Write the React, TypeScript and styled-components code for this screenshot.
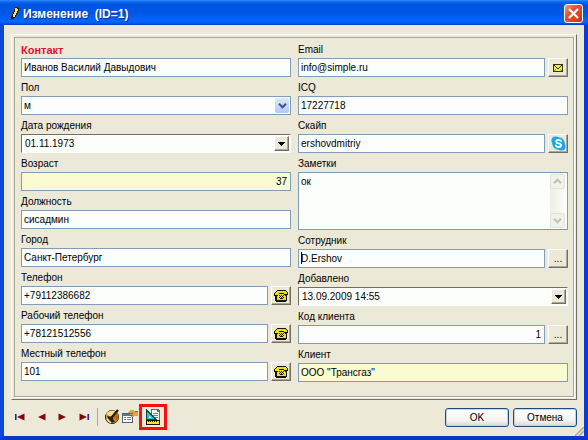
import React, { useId } from 'react';
import styled, { createGlobalStyle, css } from 'styled-components';

const GlobalStyle = createGlobalStyle`
  * { box-sizing: border-box; }
  body { margin: 0; background: #ece9d8; }
  body, input, textarea, select, button {
    font-family: "Liberation Sans", Arial, sans-serif;
    font-size: 10px;
    color: #000;
  }
`;

const Window = styled.main`
  display: flex;
  flex-direction: column;
  min-height: 100vh;
  background: #ece9d8;
  border: 4px solid #0848dc;
  border-width: 0 4px 4px;
  border-bottom-color: #0838c8;
  border-right-color: #0a3cd0;
`;

const TitleBar = styled.header`
  display: flex;
  align-items: center;
  gap: 3px;
  height: 25px;
  margin: 0 -4px;
  padding: 2px 5px 0 7px;
  background: linear-gradient(#2f8cf8 0, #0a66ea 2px, #0054e0 5px, #0056e6 14px, #0064fc 19px, #0066ff 22px, #003fd0 25px);
`;

const Title = styled.h1`
  flex: 1;
  margin: 0;
  font-size: 12px;
  line-height: 16px;
  font-weight: bold;
  color: #fff;
  text-shadow: 1px 1px 0 #0a2a90;
  white-space: pre;
`;

const CloseButton = styled.button`
  display: flex;
  align-items: center;
  justify-content: center;
  width: 19px;
  height: 19px;
  padding: 0;
  border: 1px solid #fff;
  border-radius: 3px;
  background: linear-gradient(135deg, #f0a088, #e0573a 35%, #d84020 75%, #b83010);
`;

const GroupFrame = styled.section`
  flex: 1;
  display: flex;
  margin: 9px 7px 0;
  padding: 2px;
  border: 1px solid;
  border-color: #fff #716f64 #716f64 #fff;
`;

const GroupInner = styled.div`
  flex: 1;
  display: grid;
  grid-template-columns: 1fr 1fr;
  gap: 7px;
  padding: 5px 5px 14px 6px;
  border: 1px solid #aca899;
  box-shadow: 1px 1px 0 #fff;
`;

const Column = styled.div`
  display: flex;
  flex-direction: column;
  gap: 4px;
  min-width: 0;
`;

const Field = styled.div`
  display: flex;
  flex-direction: column;
  gap: 1px;
`;

const Label = styled.label<{ $required?: boolean }>`
  height: 14px;
  line-height: 14px;
  white-space: nowrap;
  ${p => p.$required && css`
    color: #dc1435;
    font-size: 11px;
    font-weight: bold;
  `}
`;

const ControlRow = styled.div`
  display: flex;
  gap: 3px;
`;

const flatBorder = css`border: 1px solid #7f9db9;`;
const sunkenBorder = css`
  border: 1px solid;
  border-color: #716f64 #fff #fff #716f64;
`;

const TextBox = styled.input<{ $tone?: 'plain' | 'computed'; $right?: boolean; $caret?: boolean }>`
  flex: 1;
  min-width: 0;
  height: 19px;
  padding: 0 3px 1px 2px;
  border-radius: 0;
  outline: none;
  ${flatBorder}
  background: ${p => (p.$tone === 'computed' ? '#fbfbd2' : '#fcfefc')};
  text-align: ${p => (p.$right ? 'right' : 'left')};
  ${p => p.$caret && css`background: linear-gradient(#000, #000) 2px 2px / 1px 12px no-repeat #fcfefc;`}
`;

const ComboFrame = styled.div<{ $sunken?: boolean }>`
  display: grid;
  grid-template-columns: 1fr auto;
  grid-template-rows: 15px;
  height: 19px;
  background: #fcfefc;
  padding: 1px;
  ${p => (p.$sunken ? sunkenBorder : flatBorder)}
`;

const Select = styled.select`
  grid-area: 1 / 1 / 2 / 3;
  appearance: none;
  border: 0;
  outline: none;
  padding: 0 18px 0 1px;
  background: transparent;
`;

const SelectArrow = styled.span`
  grid-area: 1 / 2 / 2 / 3;
  display: flex;
  align-items: center;
  justify-content: center;
  width: 14px;
  border-radius: 2px;
  background: linear-gradient(#dce6fe, #b4c8f6);
  pointer-events: none;
`;

const DateInput = styled.input`
  min-width: 0;
  border: 0;
  outline: none;
  padding: 0 0 0 2px;
  background: transparent;
`;

const raised = css`
  display: flex;
  align-items: center;
  justify-content: center;
  padding: 0;
  background: #ece9d8;
  border: 1px solid;
  border-color: #fff #716f64 #716f64 #fff;
  box-shadow: inset -1px -1px 0 #aca899;
`;

const DropButton = styled.button`
  ${raised}
  width: 15px;
`;

const SideButton = styled.button`
  ${raised}
  width: 20px;
  height: 19px;
`;

const NotesFrame = styled.div`
  display: flex;
  height: 58px;
  padding: 1px;
  background: #fcfefc;
  ${flatBorder}
`;

const Notes = styled.textarea`
  flex: 1;
  min-width: 0;
  padding: 1px;
  border: 0;
  outline: none;
  resize: none;
  overflow: hidden;
  line-height: 14px;
  background: transparent;
`;

const ScrollTrack = styled.div`
  display: flex;
  flex-direction: column;
  justify-content: space-between;
  width: 16px;
  background: linear-gradient(90deg, #eeede5, #fefefb);
`;

const ScrollButton = styled.button`
  display: flex;
  align-items: center;
  justify-content: center;
  width: 15px;
  height: 15px;
  padding: 0;
  border: 1px solid #e4e2d8;
  border-radius: 2px;
  background: #f3f2ea;
`;

const Footer = styled.footer`
  display: flex;
  align-items: center;
  justify-content: space-between;
  height: 36px;
  padding: 0 7px 2px 6px;
  position: relative;
`;

const Tools = styled.div`
  display: flex;
  align-items: center;
`;

const ToolButton = styled.button<{ $marked?: boolean }>`
  display: flex;
  align-items: center;
  justify-content: center;
  width: ${p => (p.$marked ? '28px' : '18px')};
  height: ${p => (p.$marked ? '26px' : '20px')};
  padding: 0;
  background: none;
  border: ${p => (p.$marked ? '3px solid #f81010' : '0')};
`;

const NavButton = styled(ToolButton)`
  width: 21px;
`;

const Divider = styled.span`
  width: 1px;
  height: 18px;
  margin: 0 5px 0 3px;
  background: #aca899;
`;

const Actions = styled.div`
  display: flex;
  gap: 4px;
`;

const DialogButton = styled.button`
  width: 64px;
  height: 19px;
  padding: 0;
  border: 1px solid #1c4c7c;
  border-radius: 3px;
  background: linear-gradient(#fff, #f4f3ee 70%, #dcd6c8);
  box-shadow: inset 0 0 0 1px #c4d4e8;
`;

const Grip = styled.svg`
  position: absolute;
  right: 0;
  bottom: 0;
`;

const PencilIcon = () => (
  <svg width="13" height="14" viewBox="0 0 13 14" shapeRendering="crispEdges" aria-hidden="true">
    <path d="M8 0h3v1h1v3h-1v2h-1v2H9v2H8v1H7v1H5v1H4V9h1V7h1V5h1V2h1z" fill="#101010" />
    <path d="M8 1h2v1h1v2h-1v2H9v2H8v2H6V7h1V5h1z" fill="#f8e840" />
    <path d="M0 12h1v1H0zM2 12h1v1H2z" fill="#081840" />
  </svg>
);

const CrossIcon = () => (
  <svg width="11" height="11" viewBox="0 0 11 11" aria-hidden="true">
    <path d="M1 1l9 9M10 1l-9 9" stroke="#fff" strokeWidth="2.2" />
  </svg>
);

const Chevron = ({ up, color }: { up?: boolean; color: string }) => (
  <svg width="9" height="7" viewBox="0 0 9 7" aria-hidden="true">
    <path d={up ? 'M1 5.2l3.5-3.4L8 5.2' : 'M1 1.8l3.5 3.4L8 1.8'} fill="none" stroke={color} strokeWidth="2.2" />
  </svg>
);

const DownTriangle = () => (
  <svg width="7" height="4" viewBox="0 0 7 4" shapeRendering="crispEdges" aria-hidden="true">
    <path d="M0 0h7v1H0zM1 1h5v1H1zM2 2h3v1H2zM3 3h1v1H3z" />
  </svg>
);

const MailIcon = () => (
  <svg width="10" height="8" viewBox="0 0 10 8" shapeRendering="crispEdges" aria-hidden="true">
    <path d="M0 0h10v8H0z" fill="#333318" />
    <path d="M1 1h8v6H1z" fill="#f0ec48" />
    <path d="M1 1h1v1h1v1h1v1h2V3h1V2h1V1h1v1H8v1H7v1H6v1H4V4H3V3H2V2H1z" fill="#222210" />
    <path d="M1 6h1v1H1zM2 5h1v1H2zM7 5h1v1H7zM8 6h1v1H8z" fill="#908c30" />
  </svg>
);

const SkypeIcon = () => (
  <svg width="15" height="15" viewBox="0 0 16 16" aria-hidden="true">
    <circle cx="4.8" cy="4.8" r="4.3" fill="#18a8ec" />
    <circle cx="11.2" cy="11.2" r="4.3" fill="#18a8ec" />
    <circle cx="8" cy="8" r="6.6" fill="#18a8ec" />
    <path d="M10.7 5.4C9.6 3.6 5.6 3.8 5.6 6c0 2.6 5.2 1.2 5.2 3.9 0 2.3-4.5 2.4-5.6.3" fill="none" stroke="#fff" strokeWidth="2" strokeLinecap="round" />
  </svg>
);

const PhoneIcon = () => (
  <svg width="14" height="12" viewBox="0 0 14 12" shapeRendering="crispEdges" aria-hidden="true">
    <path d="M3 0h9v1h1v1h1v3h-1v6h-1v1H2v-1H1V6H0V3h1V2h1V1h1z" fill="#141400" />
    <path d="M3 1h9v1h1v2h-3V3H5v2H1V3h1V2h1zM5 4h5v1h1v1h1v4H3V6h1V5h1z" fill="#e8e01c" />
    <path d="M5 5h1v1H5zM7 5h1v1H7zM9 5h1v1H9zM6 6h1v1H6zM8 6h1v1H8zM5 7h1v1H5zM7 7h1v1H7zM9 7h1v1H9zM6 8h3v1H6z" fill="#141400" />
  </svg>
);

const NavIcon = ({ back, edge }: { back?: boolean; edge?: boolean }) => (
  <svg width="11" height="8" viewBox="0 0 11 8" aria-hidden="true">
    {edge && <path d={back ? 'M.8 1v6' : 'M10.2 1v6'} stroke="#1818b0" strokeWidth="1.5" />}
    <path d={back ? 'M9.5 .5v7L2 4z' : 'M1.5 .5v7L9 4z'} fill="#800808" />
  </svg>
);

const PaletteIcon = () => (
  <svg width="16" height="16" viewBox="0 0 16 16" aria-hidden="true">
    <circle cx="8" cy="8" r="6.6" fill="#d89c30" stroke="#3a2c10" />
    <path d="M8 8L2 5c1.500-3 6-4.500 9-3z" fill="#f8dc90" />
    <path d="M8 8l5.800-4.500c1.200 3 1 6-1 8.500z" fill="#b87018" />
    <path d="M14 1L7.500 8.500" stroke="#201808" strokeWidth="2" />
    <path d="M3 7l5 1 3 5-5 1z" fill="#2a2010" />
    <path d="M3 10l4 4" stroke="#fff4c0" strokeWidth="1.500" />
  </svg>
);

const PropertiesIcon = () => (
  <svg width="16" height="14" viewBox="0 0 16 14" shapeRendering="crispEdges" aria-hidden="true">
    <path d="M0 3h11v10H0z" fill="#50606c" />
    <path d="M1 6h9v6H1z" fill="#fff" />
    <path d="M1 4h9v2H1z" fill="#4878b8" />
    <path d="M2 7h2v1H2zM2 9h2v1H2zM5 7h4v1H5zM5 9h4v1H5z" fill="#6888a8" />
    <path d="M6 2l2-2h3l1 1h4v5h-4l-1 1H9V5L6 4z" fill="#d8a850" />
    <path d="M6 3h5v1H6zM8 5h3v1H8zM13 1h3v1h-3z" fill="#806020" />
  </svg>
);

const DesignIcon = () => (
  <svg width="16" height="16" viewBox="0 0 16 16" shapeRendering="crispEdges" aria-hidden="true">
    <path d="M6 0h7l2 2v10H6z" fill="#606870" />
    <path d="M7 1h5v2h2v8H7z" fill="#f4f4f0" />
    <path d="M8 4h5v1H8zM8 6h5v1H8zM8 8h5v1H8z" fill="#788088" />
    <path d="M1 0l11 11H1z" fill="#084848" />
    <path d="M2 3l7 7H2z" fill="#20c8c8" />
    <path d="M4 7l2 2H4z" fill="#f4f4f0" />
    <path d="M1 11h14v5H1z" fill="#181800" />
    <path d="M2 12h12v3H2z" fill="#f0e830" />
    <path d="M3 12h1v1H3zM5 12h1v1H5zM7 12h1v1H7zM9 12h1v1H9zM11 12h1v1h-1z" fill="#181800" />
  </svg>
);

type TextFieldProps = {
  label: string;
  value: string;
  required?: boolean;
  computed?: boolean;
  right?: boolean;
  caret?: boolean;
  action?: { name: string; icon: React.ReactNode };
};

function TextField({ label, value, required, computed, right, caret, action }: TextFieldProps) {
  const id = useId();
  return (
    <Field>
      <Label htmlFor={id} $required={required}>{label}</Label>
      <ControlRow>
        <TextBox
          id={id}
          defaultValue={value}
          readOnly={computed}
          $tone={computed ? 'computed' : 'plain'}
          $right={right}
          $caret={caret}
        />
        {action && <SideButton type="button" aria-label={action.name}>{action.icon}</SideButton>}
      </ControlRow>
    </Field>
  );
}

function DateField({ label, value }: { label: string; value: string }) {
  const id = useId();
  return (
    <Field>
      <Label htmlFor={id}>{label}</Label>
      <ComboFrame $sunken>
        <DateInput id={id} defaultValue={value} />
        <DropButton type="button" aria-label="Открыть календарь"><DownTriangle /></DropButton>
      </ComboFrame>
    </Field>
  );
}

const call = { name: 'Позвонить', icon: <PhoneIcon /> };
const browse = { name: 'Выбрать', icon: '...' };

export default function App() {
  return (
    <>
      <GlobalStyle />
      <Window>
        <TitleBar>
          <PencilIcon />
          <Title>{'Изменение  (ID=1)'}</Title>
          <CloseButton type="button" aria-label="Закрыть"><CrossIcon /></CloseButton>
        </TitleBar>
        <GroupFrame>
          <GroupInner>
            <Column>
              <TextField label="Контакт" value="Иванов Василий Давыдович" required />
              <Field>
                <Label htmlFor="gender">Пол</Label>
                <ComboFrame>
                  <Select id="gender" defaultValue="м">
                    <option>м</option>
                    <option>ж</option>
                  </Select>
                  <SelectArrow><Chevron color="#405888" /></SelectArrow>
                </ComboFrame>
              </Field>
              <DateField label="Дата рождения" value="01.11.1973" />
              <TextField label="Возраст" value="37" computed right />
              <TextField label="Должность" value="сисадмин" />
              <TextField label="Город" value="Санкт-Петербург" />
              <TextField label="Телефон" value="+79112386682" action={call} />
              <TextField label="Рабочий телефон" value="+78121512556" action={call} />
              <TextField label="Местный телефон" value="101" action={call} />
            </Column>
            <Column>
              <TextField label="Email" value="info@simple.ru" action={{ name: 'Написать письмо', icon: <MailIcon /> }} />
              <TextField label="ICQ" value="17227718" />
              <TextField label="Скайп" value="ershovdmitriy" action={{ name: 'Skype', icon: <SkypeIcon /> }} />
              <Field>
                <Label htmlFor="notes">Заметки</Label>
                <NotesFrame>
                  <Notes id="notes" defaultValue="ок" />
                  <ScrollTrack>
                    <ScrollButton type="button" aria-label="Вверх"><Chevron up color="#c4c2b4" /></ScrollButton>
                    <ScrollButton type="button" aria-label="Вниз"><Chevron color="#c4c2b4" /></ScrollButton>
                  </ScrollTrack>
                </NotesFrame>
              </Field>
              <TextField label="Сотрудник" value="D.Ershov" caret action={browse} />
              <DateField label="Добавлено" value="13.09.2009 14:55" />
              <TextField label="Код клиента" value="1" right action={browse} />
              <TextField label="Клиент" value={'ООО "Трансгаз"'} computed />
            </Column>
          </GroupInner>
        </GroupFrame>
        <Footer>
          <Tools>
            <NavButton type="button" aria-label="Первая запись"><NavIcon back edge /></NavButton>
            <NavButton type="button" aria-label="Предыдущая запись"><NavIcon back /></NavButton>
            <NavButton type="button" aria-label="Следующая запись"><NavIcon /></NavButton>
            <NavButton type="button" aria-label="Последняя запись"><NavIcon edge /></NavButton>
            <Divider />
            <ToolButton type="button" aria-label="Оформление"><PaletteIcon /></ToolButton>
            <ToolButton type="button" aria-label="Свойства"><PropertiesIcon /></ToolButton>
            <ToolButton type="button" aria-label="Дизайнер формы" $marked><DesignIcon /></ToolButton>
          </Tools>
          <Actions>
            <DialogButton type="submit">OK</DialogButton>
            <DialogButton type="button">Отмена</DialogButton>
          </Actions>
          <Grip width="9" height="9" viewBox="0 0 9 9" aria-hidden="true">
            <path d="M0 9l9-9M4 9l5-5" stroke="#a8a594" strokeWidth="1.500" />
          </Grip>
        </Footer>
      </Window>
    </>
  );
}
